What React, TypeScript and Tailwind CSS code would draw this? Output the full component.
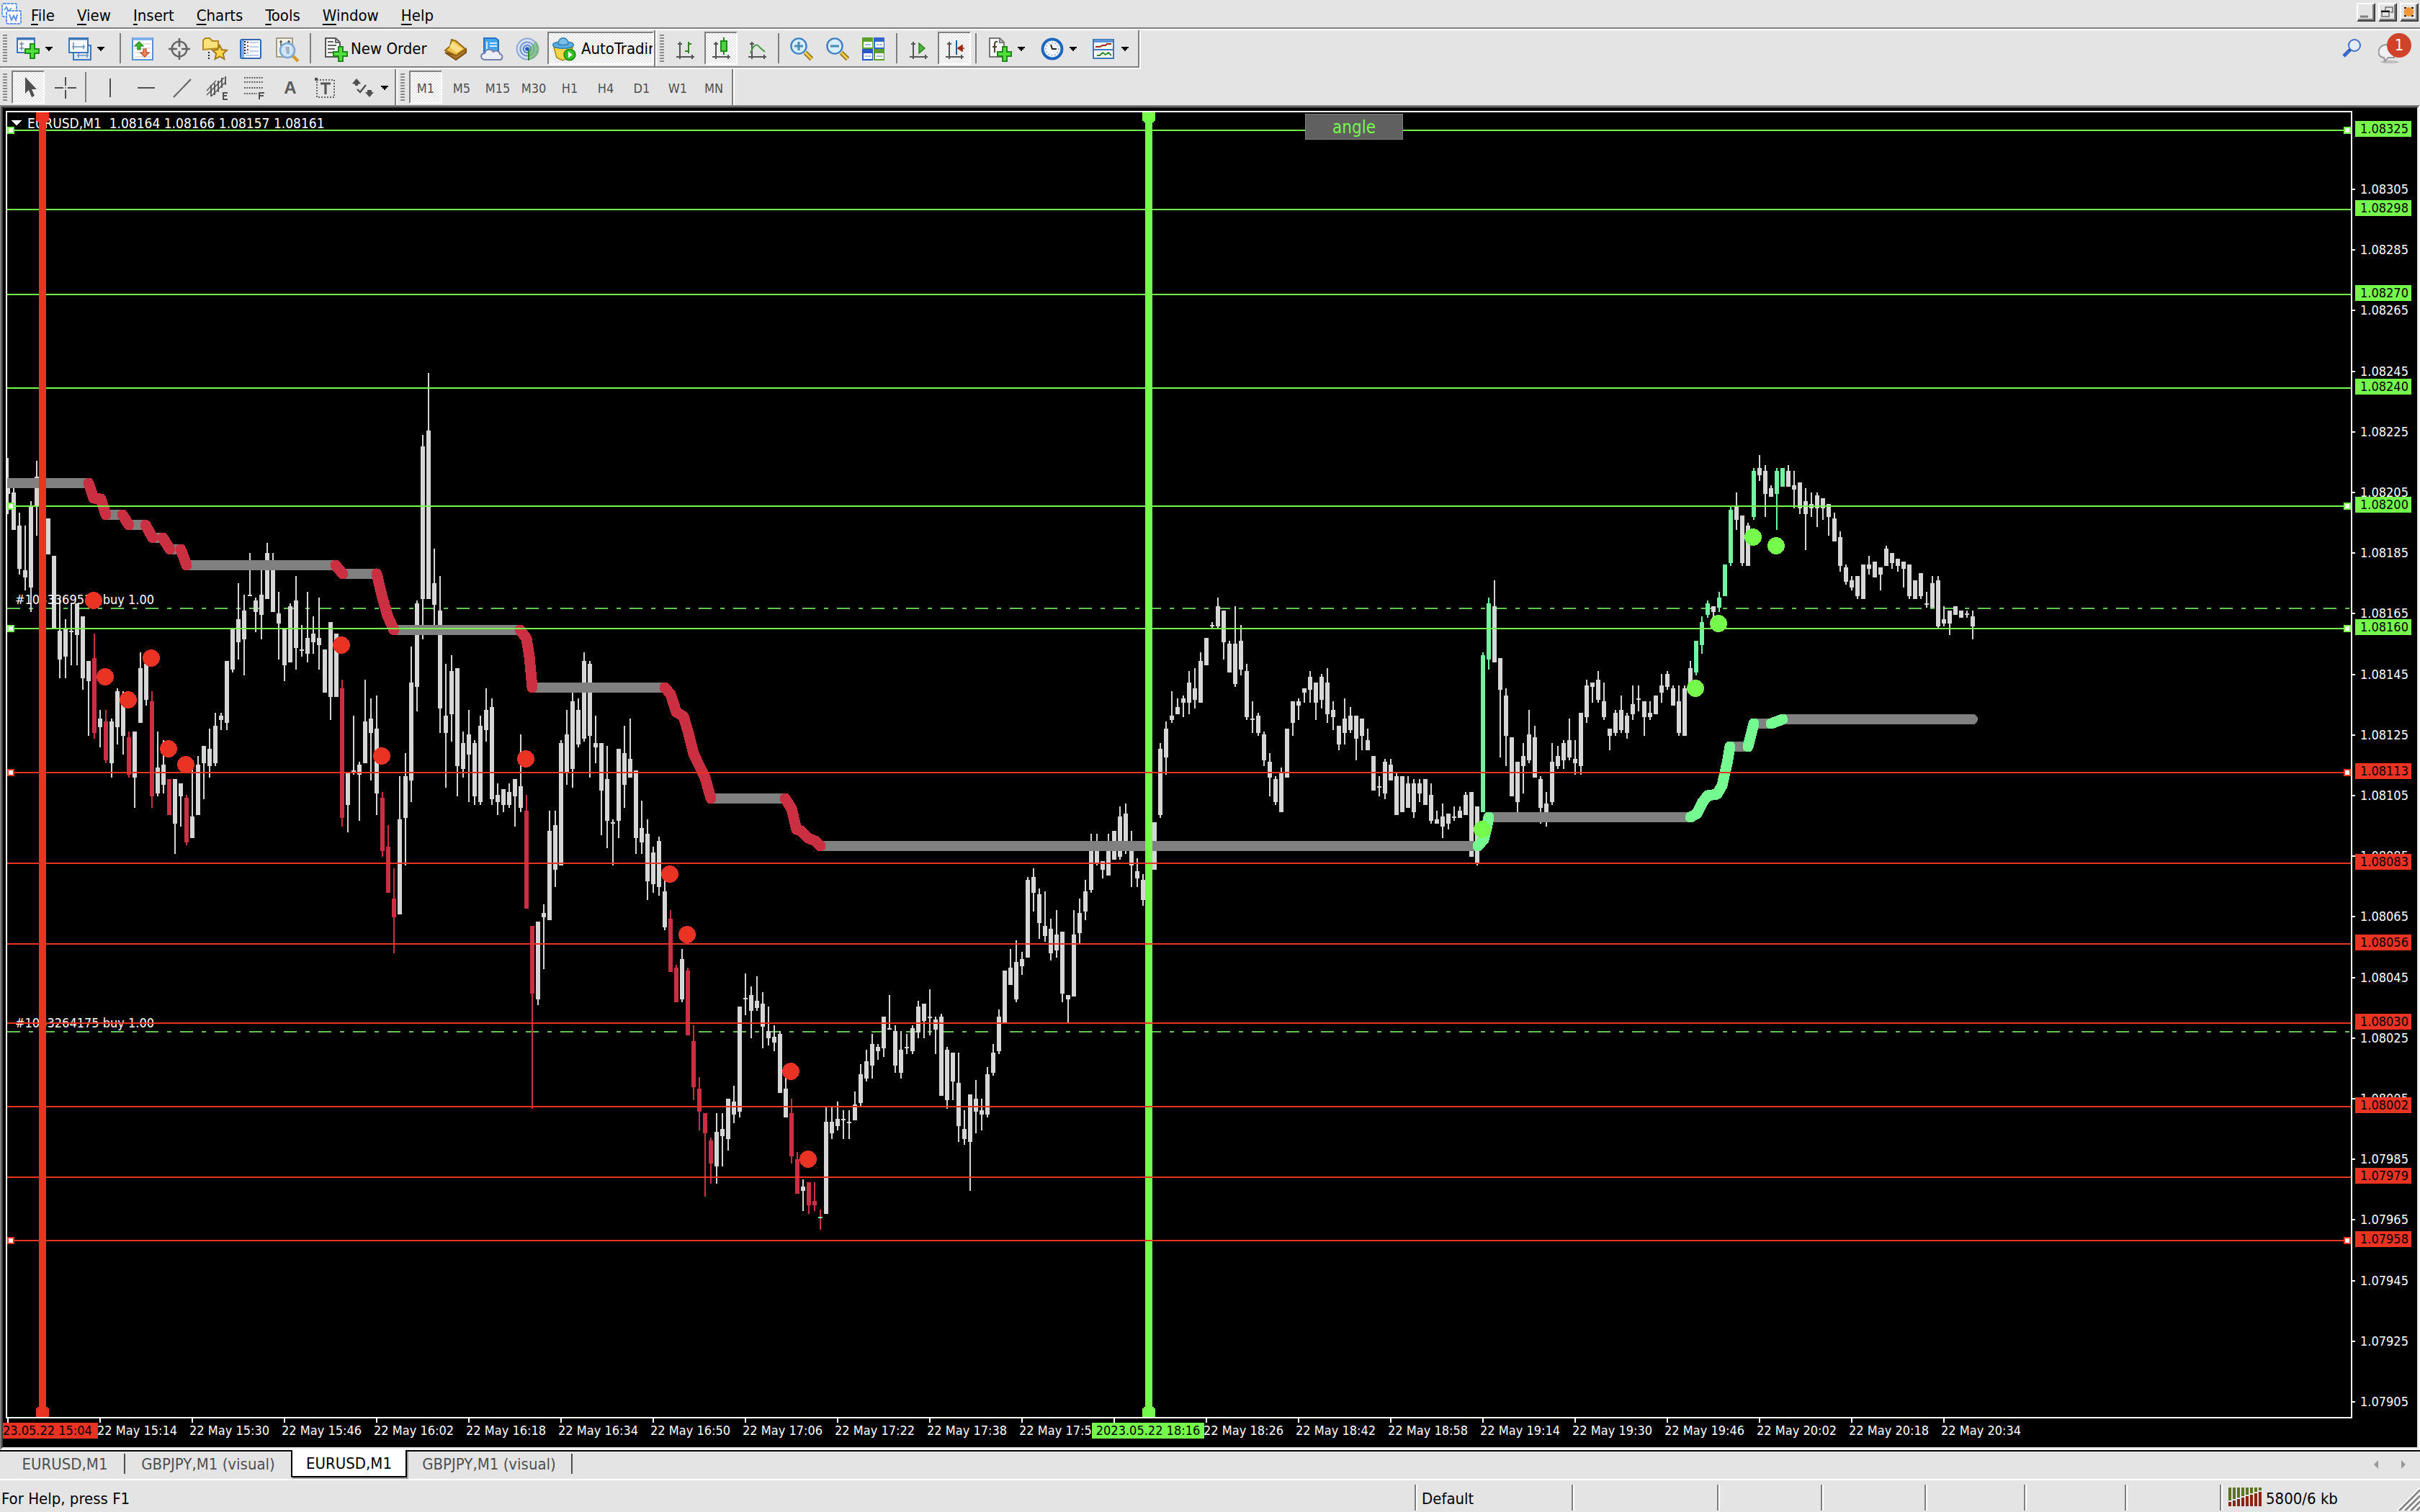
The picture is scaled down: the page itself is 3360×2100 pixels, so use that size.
import type { ReactNode } from 'react';
import clsx from 'clsx';

// One bar per minute: high/top/bottom/low in points above 1.08000.
// A leading r or g marks a trend bar, d a reversal bar.
const BAR_DATA = `
216/207/205/198 208/205/193/193 198/194/180/178 194/179/177/173 202/200/174/166 215/210/201/191 201/200/196/195 196/196/185/185
184/184/160/160 170/159/150/144 163/160/151/144 168/159/159/148 168/168/158/148 164/164/144/140 149/149/143/125 r158/150/126/124
133/130/128/121 r133/129/117/116 130/129/116/111 140/139/128/122 139/137/125/119 r126/124/112/111 126/126/111/101 152/147/129/129
149/148/137/135 r139/136/105/101 126/114/106/105 123/115/109/106 r110/110/99/99 110/110/96/86 109/109/105/95 r105/104/90/89
114/98/91/91 118/115/99/99 121/121/116/104 127/120/115/111 132/128/116/115 132/131/130/127 149/149/129/127 160/160/147/146
175/163/156/150 171/166/157/145 185/171/171/171 170/169/166/159 180/171/165/157 188/185/170/170 185/181/166/166 172/165/162/150
160/160/148/143 168/167/149/149 177/169/154/147 161/153/153/151 172/157/152/149 164/158/156/152 170/157/155/147 153/153/139/139
162/162/138/130 158/158/138/138 r143/140/98/95 112/112/102/93 131/113/113/112 116/115/112/97 143/129/116/116 137/130/126/110
138/127/106/99 r106/104/87/85 r95/88/73/73 r81/71/65/53 111/97/66/66 119/111/98/82 154/142/110/103 169/168/141/133
224/220/170/157 244/225/170/170 186/175/168/161 177/166/134/126 148/131/126/108 151/146/132/123 147/147/115/105 126/122/114/111
133/125/119/103 123/122/105/102 131/128/103/102 140/133/127/123 137/134/104/102 109/105/103/99 107/107/102/100 109/106/102/101
110/110/105/95 125/108/101/100 r105/100/68/68 r62/62/40/2 63/63/38/36 69/66/65/48 100/93/64/64 100/95/81/75
123/122/82/82 133/125/113/109 139/136/114/108 137/133/122/121 152/149/124/123 149/148/125/111 131/122/121/116 122/122/107/92
121/110/97/88 97/96/96/82 120/120/97/91 128/119/109/101 130/117/111/111 113/113/91/86 103/94/90/86 97/92/77/71
88/86/76/73 91/90/75/72 77/73/62/61 r67/64/47/47 r49/48/37/37 54/51/38/37 r48/47/26/26 r29/24/9/5
r12/8/1/-5 r0/0/-6/-27 r-8/-9/-16/-23 0/-6/-17/-23 0/-5/-7/-17 5/5/-8/-12 9/4/0/-3 35/35/1/-1
46/38/38/33 42/39/34/25 45/37/35/34 40/36/29/22 35/27/25/23 29/25/24/21 27/26/7/7 12/8/-1/-1
r5/0/-14/-16 r-13/-15/-26/-26 -22/-24/-25/-32 r-23/-23/-30/-33 r-23/-29/-30/-32 d-32/-34/-34/-38 2/-3/-33/-33 2/-3/-6/-8
4/-2/-4/-5 1/-2/-2/-8 1/-3/-3/-8 7/3/-2/-2 16/13/4/3 21/17/12/11 26/23/16/12 23/22/21/18
32/32/22/19 39/28/28/28 29/27/16/14 27/21/14/12 26/22/22/20 29/28/21/20 37/35/27/25 36/36/31/25
41/32/32/26 32/31/28/20 33/32/6/6 22/21/5/2 20/20/11/5 20/10/-4/-9 1/-5/-8/-10 6/6/-9/-25
11/5/1/-6 5/1/0/-5 15/13/0/-1 23/20/14/13 34/32/21/20 47/47/30/30 54/48/43/43 57/50/38/37
53/51/49/46 78/77/52/52 81/78/73/67 74/72/63/58 73/62/59/57 64/61/53/51 67/59/54/52 60/60/40/37
39/39/38/30 67/59/39/39 71/66/60/56 77/73/67/64 92/88/74/73 92/88/83/82 83/83/81/78 92/88/79/79
93/93/84/84 101/98/85/84 102/99/88/86 93/88/82/75 84/80/78/75 79/77/71/69 80/80/75/75 96/96/81/81
122/120/99/98 129/127/118/112 139/131/130/129 137/134/132/132 138/137/136/131 146/142/136/132 147/140/137/134 152/149/136/136
157/157/148/148 162/161/161/160 170/167/161/160 166/166/156/150 156/155/146/146 167/155/142/141 161/156/147/145 148/146/131/130
136/130/130/126 132/131/126/125 126/125/117/115 119/116/111/105 111/110/103/102 114/112/100/100 127/127/111/111 136/136/129/125
137/136/135/130 140/140/139/136 146/144/140/136 142/142/136/130 145/144/137/134 147/142/132/129 136/133/131/127 128/128/122/120
137/130/126/122 134/131/127/126 131/131/124/117 130/130/125/120 127/123/120/120 118/118/107/107 111/108/108/105 117/116/106/104
117/115/110/110 112/111/99/99 111/111/100/100 111/109/101/101 110/109/100/98 110/109/106/103 110/110/102/102 109/105/97/96
100/97/96/96 102/98/95/91 99/99/96/94 101/98/98/97 101/100/98/98 106/105/99/99 106/106/85/85 101/101/83/82
g152/151/100/100 g170/168/150/147 176/167/149/149 150/150/140/118 140/138/125/115 124/124/105/105 116/116/103/100 122/118/115/106
133/125/117/116 128/124/111/111 111/110/101/96 106/102/98/95 122/116/103/102 121/118/115/114 123/122/117/114 130/123/118/117
123/117/116/112 132/132/115/112 143/141/131/129 142/142/141/136 146/143/137/136 142/136/131/130 127/127/125/120 133/132/126/125
138/133/127/126 132/131/126/124 141/135/132/130 141/137/137/133 136/136/131/125 136/132/131/130 138/138/132/132 145/141/139/136
146/145/141/140 141/140/135/135 141/136/126/125 141/140/125/125 149/147/142/142 g156/156/146/145 g164/162/155/152 g169/168/165/164
167/167/166/163 g172/170/167/166 g181/181/171/171 g200/199/182/181 205/200/196/193 197/197/182/181 195/194/181/181 g213/212/197/196
217/213/211/209 214/212/205/197 207/206/204/204 g213/212/205/193 g213/213/207/207 214/212/207/207 212/207/206/200 208/208/200/198
206/202/198/186 205/201/200/197 205/204/200/194 203/203/200/196 201/201/197/191 198/196/189/189 192/190/181/179 181/180/176/175
177/176/174/173 177/177/171/170 181/181/170/170 184/181/180/178 182/182/177/177 180/180/178/173 187/186/181/181 185/185/182/180
183/183/181/179 182/182/180/174 181/181/171/170 176/176/170/170 178/178/171/170 172/168/168/167 177/175/167/167 177/176/161/160
167/163/162/161 166/166/162/158 167/167/165/165 166/166/164/164 166/165/165/164 166/164/161/157`;

const BAR_COLORS: Record<string, { wick: string; body: string }> = {
  r: { wick: '#cb3042', body: '#cb3042' },
  g: { wick: '#72f5a0', body: '#72f5a0' },
  d: { wick: '#cb3042', body: '#72f5a0' },
};

const bars = BAR_DATA.trim().split(/\s+/).map((item) => {
  const colors = BAR_COLORS[item[0]] ?? { wick: '#d6d6d6', body: '#d6d6d6' };
  const [high, top, bottom, low] = item.replace(/^[rgd]/, '').split('/').map(Number);
  return { ...colors, high, top, bottom, low };
});

const GREEN = '#75fb4c';
const RED = '#ea3323';

const priceY = (points: number) => 263 + (305 - points) * 4.21;
const snap = (y: number) => Math.round(y / 2) * 2;
const formatPrice = (points: number) => (1.08 + points / 100000).toFixed(5);

const levels = [
  { points: 325, y: 181, color: GREEN, handles: true },
  { points: 298, y: 291, color: GREEN },
  { points: 270, y: 409, color: GREEN },
  { points: 240, y: 539, color: GREEN },
  { points: 200, y: 703, color: GREEN, handles: true },
  { points: 160, y: 873, color: GREEN, handles: true },
  { points: 113, y: 1073, color: RED, handles: true },
  { points: 83, y: 1199, color: RED },
  { points: 56, y: 1311, color: RED },
  { points: 30, y: 1421, color: RED },
  { points: 2, y: 1537, color: RED },
  { points: -21, y: 1635, color: RED },
  { points: -42, y: 1723, color: RED, handles: true },
];

const orders = [
  { y: 845, label: '#1033369512 buy 1.00' },
  { y: 1433, label: '#1033264175 buy 1.00' },
];

const flatRibbon = [
  '0,671 123,671', '147,715 170,715', '179,729 202,729', '212,747 226,747', '236,763 251,763', '259,785 466,785',
  '476,797 523,797', '547,875 722,875', '739,955 923,955', '987,1109 1090,1109', '1139,1175 2052,1175',
  '2067,1135 2347,1135', '2402,1037 2427,1037', '2435,1005 2459,1005', '2475,999 2739,999',
];

const downRibbon = [
  '123,671 130,692 140,693 147,715', '170,715 179,729', '202,729 212,747', '226,747 236,763', '251,763 259,785',
  '466,785 476,797', '523,797 531,830 538,855 547,875', '722,875 731,887 735,912 739,955',
  '923,955 931,964 939,989 949,995 955,1015 963,1047 979,1080 987,1109',
  '1090,1109 1099,1123 1106,1152 1112,1154 1122,1164 1132,1168 1139,1175',
];

const upRibbon = [
  '2052,1175 2060,1166 2064,1150 2067,1135',
  '2347,1135 2356,1130 2364,1114 2371,1105 2384,1103 2391,1091 2398,1060 2402,1037',
  '2427,1037 2435,1005', '2459,1005 2475,999',
];

const sellDots = [
  [130, 834], [146, 940], [178, 972], [210, 914], [234, 1040], [258, 1062], [474, 896], [530, 1050],
  [730, 1054], [930, 1214], [954, 1298], [1098, 1488], [1122, 1610],
];
const buyDots = [[2058, 1152], [2434, 746], [2466, 758], [2386, 866], [2354, 956]];

// an empty entry keeps its tick but gives its room to a marker label
const times = [
  '', '15:14', '15:30', '15:46', '16:02', '16:18', '16:34', '16:50', '17:06', '17:22', '17:38',
  '17:54', '', '18:26', '18:42', '18:58', '19:14', '19:30', '19:46', '20:02', '20:18', '20:34',
];

const axisPoints = Array.from({ length: 21 }, (_, i) => 305 - i * 20);

function Icon({ children }: { children: ReactNode }) {
  return (
    <svg viewBox="0 0 16 16" className="h-8 w-8 shrink-0 overflow-visible" aria-hidden="true">
      {children}
    </svg>
  );
}

function Plus() {
  return <path d="M9.5 3.5h3v3.500h3v3h-3v3.500h-3v-3.500h-3.500v-3h3.500z" fill="#4fe03c" stroke="#1f8a17" />;
}

const NewChartIcon = () => (
  <Icon>
    <rect x="0.500" y="0.500" width="12" height="10" fill="#f4f8fe" stroke="#3f76b8" />
    <path d="M0.500 1h12" stroke="#3f76b8" strokeWidth="1.500" />
    <path d="M3.500 3v6M2 4.500h3M2 7.500h3" stroke="#6f93b8" strokeWidth="0.800" />
    <g transform="translate(0 1)"><Plus /></g>
  </Icon>
);

const ProfilesIcon = () => (
  <Icon>
    <rect x="3.500" y="5.500" width="12" height="10" fill="#dde9f8" stroke="#3f76b8" />
    <path d="M6 12.500h8M7 11v3M13 11v3" stroke="#6f93b8" strokeWidth="0.800" />
    <rect x="0.500" y="0.500" width="13" height="10" fill="#f4f8fe" stroke="#3f76b8" />
    <path d="M0.500 1h13" stroke="#3f76b8" strokeWidth="1.500" />
    <path d="M2.500 6.500h9M3.500 3.500v5M10.500 5v3" stroke="#6f93b8" strokeWidth="0.800" />
  </Icon>
);

const MarketWatchIcon = () => (
  <Icon>
    <rect x="0.500" y="0.500" width="14" height="15" fill="#fff" stroke="#5b8fd0" />
    <path d="M0.500 1h14" stroke="#7fb0ea" strokeWidth="2" />
    <path d="M2 4.500h11M2 7.500h11M2 10.500h11M2 13.500h11" stroke="#e2e2e2" />
    <path d="M5 3l3 3H6v2.500H4V6H2z" fill="#3fb833" stroke="#1f8a17" strokeWidth="0.600" />
    <path d="M9 13.500l-3-3h2V8h2v2.500h2z" fill="#ef8a60" stroke="#b8421c" strokeWidth="0.600" />
  </Icon>
);

const DataWindowIcon = () => (
  <Icon>
    <circle cx="8" cy="8" r="5.200" fill="none" stroke="#636363" strokeWidth="1.200" />
    <path d="M8 0.500v6M8 9.500v6M0.500 8h6M9.500 8h6" stroke="#636363" strokeWidth="1.300" />
  </Icon>
);

const NavigatorIcon = () => (
  <Icon>
    <path d="M-0.500 8.500V2L1 0.500h3L6 2.500h4v5z" fill="#fbe27a" stroke="#b28a1d" />
    <path d="M3.500 10v6" stroke="#222" strokeDasharray="1 1" />
    <path d="M11 5.500l1.500 3 3.500.4-2.600 2.400.8 3.700-3.200-1.800-3.200 1.800.8-3.700-2.600-2.400 3.500-.4z" fill="#fbd54a" stroke="#a8761a" />
  </Icon>
);

const TerminalIcon = () => (
  <Icon>
    <rect x="0.500" y="1.500" width="14" height="13" rx="1" fill="#fff" stroke="#2f66ad" />
    <path d="M2 2v12" stroke="#7fb0ea" strokeWidth="2" />
    <path d="M3.500 2.500v9" stroke="#222" strokeDasharray="1 1" />
    <path d="M5.500 3v8" stroke="#e52620" strokeDasharray="1 1.500" />
    <path d="M7 3.500h6M7 6.500h6M7 9.500h6M4 12.500h9" stroke="#b9cdec" />
  </Icon>
);

const TesterIcon = () => (
  <Icon>
    <rect x="0.500" y="0.500" width="11" height="13" fill="#f6f3ea" stroke="#a59c84" />
    <path d="M3.500 2v4M9 2v3M2.500 3h2M8 3h2" stroke="#555" strokeWidth="0.800" />
    <path d="M11.500 12.500l4 4" stroke="#d89a24" strokeWidth="2.200" />
    <circle cx="8" cy="9" r="5" fill="#cfe6fa" fillOpacity="0.900" stroke="#7ba7d2" strokeWidth="1.300" />
    <path d="M6.500 6.500h3v5h-2z" fill="#9fb4c6" />
  </Icon>
);

const NewOrderIcon = () => (
  <Icon>
    <path d="M0.500 0.500h7l3 3v10h-10z" fill="#fafafa" stroke="#555" />
    <path d="M7.500 0.500v3h3M2 3h4M2 5.500h6M2 8h5M2 10.500h4" fill="none" stroke="#666" />
    <g transform="translate(0 3)"><Plus /></g>
  </Icon>
);

const BookIcon = () => (
  <Icon>
    <path d="M0.500 10.500L8 15.500l7-5v-2.500L8 12.500z" fill="#b07a2c" stroke="#7a4d12" />
    <path d="M5 1.500l3 1 6.500 5.500L8 12.500 0.500 9 4 6z" fill="#f3c24a" stroke="#9a6a17" />
    <path d="M5.500 3l7 5-4 2.500-5-4z" fill="#fbe08a" />
  </Icon>
);

const CloudIcon = () => (
  <Icon>
    <path d="M2.500 0.500h8l2 1.500v8h-10z" fill="#43a5f2" stroke="#2672c4" />
    <path d="M4.500 3v5M6.500 4h5M6.500 6h5" stroke="#d5ecff" />
    <path d="M3 15.500c-3.500-.5-3-4.500 0-4.500C3.500 8 7.500 7.500 9 10c2-1.500 4.500-.3 4.500 1.500 2.500.5 2 4 0 4z" fill="#eceff8" stroke="#7480a8" />
  </Icon>
);

const SignalIcon = () => (
  <Icon>
    <circle cx="7.500" cy="8" r="7.200" fill="#d5e3ee" stroke="#8fa8d8" />
    <circle cx="7.500" cy="8" r="4.800" fill="none" stroke="#7a98d6" />
    <circle cx="7.500" cy="8" r="2.600" fill="none" stroke="#5c84d0" />
    <path d="M8.500 8l5-5.500a7.500 7.500 0 0 1-5 13z" fill="#62b35a" fillOpacity="0.600" />
    <path d="M8.500 8v8" stroke="#2f8f26" />
    <circle cx="7.500" cy="8" r="1.400" fill="#2258c8" />
  </Icon>
);

const AutoTradingIcon = () => (
  <Icon>
    <path d="M1 7h13l-3 7.500-4 1.500-4-2z" fill="#f5d548" stroke="#a98a1c" strokeWidth="0.800" />
    <ellipse cx="7.500" cy="5.200" rx="7.200" ry="2.500" fill="#5aaede" stroke="#2f7cb0" strokeWidth="0.700" />
    <path d="M4 4.500C4 -1 11 -1 11 4.500c-2 1-5 1-7 0z" fill="#78c0ea" stroke="#2f7cb0" strokeWidth="0.700" />
    <circle cx="12" cy="12" r="3.900" fill="#2fc321" stroke="#14860c" strokeWidth="0.800" />
    <path d="M11 9.800v4.400l3-2.200z" fill="#fff" />
  </Icon>
);

function Axes() {
  return (
    <>
      <path d="M3.500 3v12M1 13.500h12.500" stroke="#555" />
      <path d="M2 4.500h3M12 12v3" stroke="#555" />
    </>
  );
}

const BarChartIcon = () => (
  <Icon>
    <Axes />
    <path d="M9.500 3v8M9.500 4.500h2M7 9.500h2.500" stroke="#2f8020" />
  </Icon>
);

const CandlesIcon = () => (
  <Icon>
    <Axes />
    <path d="M9 0v12" stroke="#1f8a17" />
    <rect x="7" y="2.500" width="4" height="7" fill="#4fd047" stroke="#1f8a17" />
  </Icon>
);

const LineChartIcon = () => (
  <Icon>
    <Axes />
    <path d="M2.500 11c2-6 4.500-7 6-4.500l4 3.500" fill="none" stroke="#4a9a42" />
  </Icon>
);

function Magnifier({ children }: { children?: ReactNode }) {
  return (
    <Icon>
      <path d="M10.500 10.500l4.500 4.500" stroke="#8a6a10" strokeWidth="3.200" />
      <path d="M10.500 10.500l4.500 4.500" stroke="#eccb45" strokeWidth="1.600" />
      <circle cx="6" cy="6" r="5.300" fill="#d7eefc" stroke="#3f7fc4" strokeWidth="1.200" />
      {children}
    </Icon>
  );
}

const TileIcon = () => (
  <Icon>
    <rect width="7.500" height="8" fill="#5aa02c" />
    <rect x="8" width="7.500" height="8" fill="#3465cc" />
    <rect y="8" width="7.500" height="8" fill="#2858c8" />
    <rect x="8" y="8" width="7.500" height="8" fill="#5aa02c" />
    <path d="M1 3h6v4H1zM9 3h6v4H9zM1 11h6v4H1zM9 11h6v4H9z" fill="#fff" />
    <path d="M2 5h4M10 5h1.500M12 5h2M2 13h1.500M4 13h2M10 13h4" stroke="#9ab8dc" />
  </Icon>
);

const ScrollIcon = () => (
  <Icon>
    <Axes />
    <path d="M7.500 4l4 3.500-4 3.500z" fill="#4fb047" stroke="#1f8a17" strokeWidth="0.700" />
  </Icon>
);

const ShiftIcon = () => (
  <Icon>
    <Axes />
    <path d="M8.500 2v10" stroke="#1d5f9a" />
    <path d="M9.500 7.500l3-2v4z M12 7.500h2" fill="#9c2a10" stroke="#9c2a10" strokeWidth="0.800" />
  </Icon>
);

const IndicatorIcon = () => (
  <Icon>
    <path d="M0.500 0.500h7l3 3v10h-10z" fill="#fafafa" stroke="#777" />
    <path d="M7.500 0.500v3h3" fill="none" stroke="#777" />
    <path d="M6 3c-2-.5-2 1-2 2.500v5M2.500 6.500h3" fill="none" stroke="#4a4030" />
    <g transform="translate(0 3)"><Plus /></g>
  </Icon>
);

const ClockIcon = () => (
  <Icon>
    <circle cx="8" cy="8" r="6.700" fill="#f1f6fc" stroke="#1c66c0" strokeWidth="2" />
    <circle cx="8" cy="8" r="4.500" fill="none" stroke="#9aa7b5" strokeWidth="0.800" strokeDasharray="0.800 1.500" />
    <path d="M7 5l1 3h3" fill="none" stroke="#222" />
  </Icon>
);

const TemplateIcon = () => (
  <Icon>
    <rect x="0.500" y="1.500" width="14" height="13" fill="#fff" stroke="#3f76b8" />
    <path d="M1 2.500h13" stroke="#5b93d8" strokeWidth="2" />
    <path d="M1 8.500h13" stroke="#3f76b8" />
    <path d="M2 6.500h3l2-1h2l1-1h3" fill="none" stroke="#9c2a10" />
    <path d="M3 12.500h2l2-2 2 1.500 2-1.500 2 2" fill="none" stroke="#2f8f26" />
  </Icon>
);

const CursorIcon = () => (
  <Icon>
    <path d="M5 0.500v11.500l2.500-2.500 2 5 2-1-2-4.500H13z" fill="#505050" />
  </Icon>
);

const CrosshairIcon = () => (
  <Icon>
    <path d="M8 0.500v6M8 9.500v6M0.500 8h6M9.500 8h6M7.700 8h0.600" stroke="#505050" />
  </Icon>
);

const VerticalIcon = () => <Icon><path d="M8 1.500v13" stroke="#505050" /></Icon>;
const HorizontalIcon = () => <Icon><path d="M2 8h12" stroke="#505050" /></Icon>;
const TrendIcon = () => <Icon><path d="M2 14.500L14 2" stroke="#606060" /></Icon>;

const ChannelIcon = () => (
  <Icon>
    <path d="M0 10l6.500-7M0 13L12 1M3 14l10-10" stroke="#606060" strokeWidth="0.800" />
    <path d="M3 6v8M5.500 5v8M8 3v8M10.500 1v7M13 0v6" stroke="#505050" strokeWidth="0.900" />
    <path d="M14.500 11.500h-3v4.500h3M11.500 13.500h2.500" fill="none" stroke="#505050" />
  </Icon>
);

const FiboIcon = () => (
  <Icon>
    <path d="M1 1h13M1 4h13M1 8h13M1 12h9" stroke="#606060" strokeDasharray="1 0.700" />
    <path d="M11.500 16v-4.500h3.500M11.500 13.500h3" fill="none" stroke="#505050" />
  </Icon>
);

const LabelIcon = () => (
  <Icon>
    <rect x="1.500" y="2.500" width="12" height="12" fill="none" stroke="#606060" strokeDasharray="1 1" />
    <rect x="0" y="1" width="2" height="2" fill="#505050" />
    <path d="M4 5h7M7.500 5v7.500" stroke="#555" strokeWidth="1.600" />
  </Icon>
);

const ShapesIcon = () => (
  <Icon>
    <path d="M3 1.500l3 3.500-2 0.500v1h-2v-1L0 5zM9 11h1.500v-1.500h3V11h1.500l-3 3.500z" fill="#505050" />
    <path d="M3.500 9l2 2 4-5" fill="none" stroke="#505050" strokeWidth="1.200" />
  </Icon>
);

function Grip({ className }: { className?: string }) {
  return (
    <div
      className={clsx(
        'ml-1 h-[38px] w-1.5 shrink-0 bg-[repeating-linear-gradient(to_bottom,#8a8a8a_0_2px,transparent_2px_4px)]',
        className
      )}
    />
  );
}

function Divider() {
  return <div className="mx-1 h-[42px] w-0.5 shrink-0 bg-[#808080]" />;
}

const PRESSED =
  'border-2 border-[#808080] border-r-white border-b-white bg-[repeating-conic-gradient(#fff_0_25%,#e4e4e4_0_50%)] bg-[length:4px_4px]';

interface ToolProps {
  label: string;
  pressed?: boolean;
  children: ReactNode;
}

function Tool({ label, pressed, children }: ToolProps) {
  return (
    <button
      type="button"
      aria-label={label}
      aria-pressed={pressed}
      className={clsx(
        'mx-0.5 flex h-[46px] w-[46px] shrink-0 items-center justify-center pt-0.5 pl-1',
        pressed ? PRESSED : 'border-2 border-transparent'
      )}
    >
      {children}
    </button>
  );
}

function DropTool({ label, children }: ToolProps) {
  return (
    <button type="button" aria-label={label} className="flex h-[46px] w-[72px] shrink-0 items-center gap-2 pt-0.5 pl-[13px]">
      {children}
      <svg viewBox="0 0 10 6" className="h-1.5 w-2.5" aria-hidden="true">
        <path d="M0 0h10v2H8v2H6v2H4V4H2V2H0z" fill="#000" />
      </svg>
    </button>
  );
}

const menus = ['File', 'View', 'Insert', 'Charts', 'Tools', 'Window', 'Help'];
const periods = ['M1', 'M5', 'M15', 'M30', 'H1', 'H4', 'D1', 'W1', 'MN'];

function MenuBar() {
  return (
    <header className="flex h-10 shrink-0 items-start justify-between border-b-2 border-[#808080]">
      <div className="flex items-start">
        <svg viewBox="0 0 14 15" className="mt-1 ml-0.5 h-[30px] w-7" aria-hidden="true">
          <rect x="0.500" y="0.500" width="10" height="9" rx="1" fill="#fff" stroke="#5f9ae8" strokeDasharray="2 0.500" />
          <path d="M2 5l1.500-2L5 6l2-2.500" fill="none" stroke="#5f9ae8" />
          <rect x="3.500" y="5.500" width="10" height="9" rx="1" fill="#fff" stroke="#5b8ff0" strokeDasharray="2 0.500" />
          <path d="M5.500 8l1.500 4 1.500-3 1.500 3 1-4" fill="none" stroke="#5b8ff0" />
        </svg>
        <nav className="ml-[13px] flex gap-[31px] pt-1.5 text-[22px] leading-8 text-black">
          {menus.map((menu) => (
            <button key={menu} type="button">
              <span className="underline decoration-2 underline-offset-4">{menu[0]}</span>
              {menu.slice(1)}
            </button>
          ))}
        </nav>
      </div>
      <div className="flex gap-1 pt-1 pr-0.5">
        {['Minimize', 'Restore', 'Close'].map((label) => (
          <button
            key={label}
            type="button"
            aria-label={label}
            className="flex h-[26px] w-[26px] items-center justify-center border-2 border-[#404040] border-t-white border-l-white shadow-[inset_-2px_-2px_0_#808080]"
          >
            <svg viewBox="0 0 20 20" className="h-5 w-5" aria-hidden="true">
              {label === 'Minimize' && <path d="M2 16h11" stroke="#808080" strokeWidth="3" />}
              {label === 'Restore' && (
                <>
                  <path d="M7 8V3h10v7h-3M2 8h10v8H2z" fill="none" stroke="#888" strokeWidth="2" />
                  <path d="M1 9h12" stroke="#000" strokeWidth="2" />
                </>
              )}
              {label === 'Close' && (
                <>
                  <path d="M3 3h3v2H3zM13 3h3v2h-3zM3 14h3v2H3zM13 14h3v2h-3z" fill="#111" />
                  <ellipse cx="9.500" cy="9.500" rx="7" ry="6.500" fill="#f0983a" />
                </>
              )}
            </svg>
          </button>
        ))}
      </div>
    </header>
  );
}

function Toolbars() {
  return (
    <div className="flex shrink-0 justify-between border-t-2 border-white">
      <div className="flex flex-col items-start">
        <div className="mb-0.5 flex h-[52px] items-center border-r-2 border-b-2 border-[#808080] shadow-[2px_2px_0_#fff]">
          <div className="flex h-full items-center border-r-2 border-[#808080] shadow-[2px_0_0_#fff]">
            <Grip />
            <div className="flex pr-2">
              <DropTool label="New chart"><NewChartIcon /></DropTool>
              <DropTool label="Profiles"><ProfilesIcon /></DropTool>
            </div>
            <Divider />
            <div className="flex pr-1">
              <Tool label="Market Watch"><MarketWatchIcon /></Tool>
              <Tool label="Data Window"><DataWindowIcon /></Tool>
              <Tool label="Navigator"><NavigatorIcon /></Tool>
              <Tool label="Terminal"><TerminalIcon /></Tool>
              <Tool label="Strategy Tester"><TesterIcon /></Tool>
            </div>
            <Divider />
            <button type="button" className="flex h-[46px] w-[170px] items-center gap-1 pt-0.5 pl-[15px] text-[22px] leading-8 whitespace-nowrap text-black">
              <NewOrderIcon />
              New Order
            </button>
            <Tool label="MetaEditor"><BookIcon /></Tool>
            <Tool label="Virtual hosting"><CloudIcon /></Tool>
            <Tool label="Signals"><SignalIcon /></Tool>
            <button
              type="button"
              aria-pressed="true"
              className={clsx('ml-1 flex h-[46px] w-[148px] items-center gap-2 overflow-hidden pt-0.5 pl-[5px] text-[22px] leading-8 whitespace-nowrap text-black', PRESSED)}
            >
              <AutoTradingIcon />
              AutoTrading
            </button>
          </div>
          <div className="flex h-full items-center pr-1 pl-0.5">
            <Grip className="mr-1" />
            <Tool label="Bar chart"><BarChartIcon /></Tool>
            <Tool label="Candlesticks" pressed><CandlesIcon /></Tool>
            <Tool label="Line chart"><LineChartIcon /></Tool>
            <Divider />
            <Tool label="Zoom in"><Magnifier><path d="M6 3v6M3 6h6" stroke="#4a8fb5" strokeWidth="1.600" /></Magnifier></Tool>
            <Tool label="Zoom out"><Magnifier><path d="M3 6h6" stroke="#4a8fb5" strokeWidth="1.600" /></Magnifier></Tool>
            <Tool label="Tile windows"><TileIcon /></Tool>
            <div className="w-1" />
            <Divider />
            <Tool label="Auto scroll"><ScrollIcon /></Tool>
            <Tool label="Chart shift" pressed><ShiftIcon /></Tool>
            <Divider />
            <DropTool label="Indicators"><IndicatorIcon /></DropTool>
            <DropTool label="Periods"><ClockIcon /></DropTool>
            <DropTool label="Templates"><TemplateIcon /></DropTool>
          </div>
        </div>
        <div className="flex h-[50px] items-center">
          <div className="flex h-full items-center border-r-2 border-[#808080] shadow-[2px_0_0_#fff]">
            <Grip className="mr-1" />
            <div className="flex">
              <Tool label="Cursor" pressed><CursorIcon /></Tool>
              <Tool label="Crosshair"><CrosshairIcon /></Tool>
            </div>
            <Divider />
            <div className="flex pl-0.5">
              <Tool label="Vertical line"><VerticalIcon /></Tool>
              <Tool label="Horizontal line"><HorizontalIcon /></Tool>
              <Tool label="Trendline"><TrendIcon /></Tool>
              <Tool label="Equidistant channel"><ChannelIcon /></Tool>
              <Tool label="Fibonacci retracement"><FiboIcon /></Tool>
              <Tool label="Text"><span className="font-[Liberation_Sans] text-2xl font-bold text-[#5c5c5c]">A</span></Tool>
              <Tool label="Text label"><LabelIcon /></Tool>
              <DropTool label="Arrows"><ShapesIcon /></DropTool>
            </div>
          </div>
          <div className="flex h-full items-center border-r-2 border-[#808080] pl-0.5 shadow-[2px_0_0_#fff]">
            <Grip className="mr-1" />
            {periods.map((period) => (
              <button
                key={period}
                type="button"
                aria-pressed={period === 'M1'}
                className={clsx(
                  'mx-0.5 h-[46px] w-[46px] pt-1 text-center text-lg text-[#505050]',
                  period === 'M1' ? PRESSED : 'border-2 border-transparent'
                )}
              >
                {period}
              </button>
            ))}
          </div>
        </div>
      </div>
      <div className="flex items-start gap-6 pt-1 pr-3">
        <button type="button" aria-label="Search" className="pt-2">
          <svg viewBox="0 0 26 26" className="h-[26px] w-[26px]" aria-hidden="true">
            <path d="M2 24l9-9" stroke="#3a6ac8" strokeWidth="5" />
            <path d="M10 16l3-3" stroke="#1530a0" strokeWidth="3" />
            <ellipse cx="17" cy="9" rx="8" ry="8" fill="#e6ecf8" stroke="#3f6fd0" strokeWidth="2" />
          </svg>
        </button>
        <button type="button" aria-label="Notifications" className="relative h-[42px] w-[46px]">
          <svg viewBox="0 0 46 42" className="h-full w-full" aria-hidden="true">
            <ellipse cx="16" cy="40" rx="13" ry="2" fill="#bdbdbd" />
            <path d="M12 16c-14 0-15 18-4 18l1 5 5-5h8V16z" fill="#f0f0f4" stroke="#999" strokeWidth="2" />
            <circle cx="29" cy="17" r="17" fill="#cf432b" />
          </svg>
          <span className="absolute top-0 left-3 w-[34px] text-center text-[22px] leading-[34px] text-white">1</span>
        </button>
      </div>
    </div>
  );
}

function Handle({ x, y, color }: { x: number; y: number; color: string }) {
  return <rect x={x + 1} y={y - 4} width="8" height="8" fill="#fff" stroke={color} strokeWidth="2" />;
}

function VerticalMarker({ x, color }: { x: number; color: string }) {
  return (
    <svg x={x} className="overflow-visible" fill={color}>
      <rect x="-5" width="10" height="100%" />
      <path d="M-9 0h18v12h-2v2h-14v-2h-2z" />
      <svg y="100%" className="overflow-visible">
        <path d="M-9 0h18v-12h-2v-2h-14v2h-2z" />
      </svg>
    </svg>
  );
}

function Plot() {
  return (
    <div className="relative min-w-0 flex-1 overflow-hidden border-2 border-white">
      <svg className="absolute inset-0 h-full w-full" shapeRendering="crispEdges" role="img" aria-label="EURUSD M1 chart">
        {/* the price scale counts pixels from the window corner, the plot starts at 10,156 */}
        <g transform="translate(-10 -156)">
          {orders.map((order) => (
            <line key={order.y} x1="10" x2="3264" y1={order.y} y2={order.y} stroke="#63c451" strokeWidth="2" strokeDasharray="18 12 6 12" />
          ))}
          {bars.map((bar, i) => {
            const x = 11 + i * 8;
            const wickTop = snap(priceY(bar.high) - 1);
            const bodyTop = snap(priceY(bar.top) - 1);
            return (
              <g key={i}>
                <rect x={x - 1} y={wickTop} width="2" height={snap(priceY(bar.low) + 1) - wickTop} fill={bar.wick} />
                <rect x={x - 3} y={bodyTop} width="6" height={snap(priceY(bar.bottom) + 1) - bodyTop} fill={bar.body} />
              </g>
            );
          })}
          <g fill="none" strokeWidth="14" strokeLinecap="round" strokeLinejoin="round">
            {flatRibbon.map((points) => <polyline key={points} points={points} stroke="#808080" />)}
            {downRibbon.map((points) => <polyline key={points} points={points} stroke="#cb3042" strokeWidth="15" />)}
            {upRibbon.map((points) => <polyline key={points} points={points} stroke="#75fb90" strokeWidth="15" />)}
          </g>
          <g fill="#fff" className="text-lg">
            <path d="M16 167h14l-7 8z" />
            <text x="38" y="178" className="text-[19px]">EURUSD,M1{'\u00a0 '}1.08164 1.08166 1.08157 1.08161</text>
            {orders.map((order) => <text key={order.y} x="21" y={order.y - 6}>{order.label}</text>)}
          </g>
          {sellDots.map(([x, y]) => <circle key={x} cx={x} cy={y} r="12" fill={RED} />)}
          {buyDots.map(([x, y]) => <circle key={x} cx={x} cy={y} r="12" fill={GREEN} />)}
        </g>
        <VerticalMarker x={1585} color={GREEN} />
        {levels.map((level) => (
          <rect key={level.points} width="100%" height="2" y={level.y - 157} fill={level.color} />
        ))}
        <VerticalMarker x={49} color={RED} />
        {levels.filter((level) => level.handles).map((level) => (
          <g key={level.points}>
            <Handle x={0} y={level.y - 156} color={level.color} />
            <svg x="100%" className="overflow-visible">
              <Handle x={-10} y={level.y - 156} color={level.color} />
            </svg>
          </g>
        ))}
      </svg>
      <button type="button" className="absolute top-0.5 left-[1802px] h-9 w-[136px] border border-[#808080] bg-[#606060] text-2xl leading-9 text-[#75fb4c]">
        angle
      </button>
    </div>
  );
}

function PriceAxis() {
  return (
    <div className="relative w-[90px] shrink-0 text-lg text-white">
      {axisPoints.map((points) => (
        <div key={points} className="absolute left-0 flex h-[22px] items-center gap-[7px]" style={{ top: Math.round(priceY(points)) - 165 }}>
          <span className="h-0.5 w-1 bg-white" />
          {formatPrice(points)}
        </div>
      ))}
      {levels.map((level) => (
        <div
          key={level.points}
          className="absolute left-1 h-[22px] w-[78px] pl-[7px] leading-[22px] text-black"
          style={{ top: level.y - 167, backgroundColor: level.color }}
        >
          {formatPrice(level.points)}
        </div>
      ))}
    </div>
  );
}

function TimeAxis() {
  return (
    <div className="relative flex h-10 shrink-0 overflow-hidden pl-[3px] text-lg text-white">
      {times.map((time, i) => (
        <div key={i} className="w-32 shrink-0">
          <div className="ml-[3px] h-1.5 w-0.5 bg-white" />
          {time && <div className="leading-[22px] whitespace-nowrap">22 May {time}</div>}
        </div>
      ))}
      <div className="absolute top-1.5 left-0 h-[22px] w-[132px] bg-[#ea3323] leading-[22px] whitespace-nowrap text-black">23.05.22 15:04</div>
      <div className="absolute top-1.5 left-[1512px] h-[22px] w-[156px] bg-[#75fb4c] text-center leading-[22px] whitespace-nowrap text-black">
        2023.05.22 18:16
      </div>
    </div>
  );
}

const tabs = ['EURUSD,M1', 'GBPJPY,M1 (visual)', 'EURUSD,M1', 'GBPJPY,M1 (visual)'];

function TabBar() {
  return (
    <div className="flex h-[42px] shrink-0 items-start justify-between border-b-2 border-white pl-2 text-[22px] text-[#505050] shadow-[inset_0_2px_0_#000]">
      <div className="flex">
        {tabs.map((tab, i) =>
          i === 2 ? (
            <button key={i} type="button" className="h-[38px] w-[161px] border-2 border-t-0 border-black bg-white text-black shadow-[2px_2px_0_#a0a0a0]">
              {tab}
            </button>
          ) : (
            <div key={i} className={clsx('flex h-[38px] items-center justify-between', i === 0 ? 'w-[166px]' : 'w-[230px]')}>
              <button type="button" className="flex-1 whitespace-nowrap">{tab}</button>
              {i !== 1 && <div className="h-7 w-0.5 bg-[#505050]" />}
            </div>
          )
        )}
      </div>
      <div className="flex h-10 items-center gap-8 pr-5">
        <button type="button" aria-label="Scroll tabs left">
          <svg viewBox="0 0 6 12" className="h-3 w-1.5"><path d="M6 0v12L0 6z" fill="#999" /></svg>
        </button>
        <button type="button" aria-label="Scroll tabs right">
          <svg viewBox="0 0 6 12" className="h-3 w-1.5"><path d="M0 0v12l6-6z" fill="#999" /></svg>
        </button>
      </div>
    </div>
  );
}

function StatusBar() {
  const cell = 'h-9 shrink-0 border-l-2 border-[#808080] shadow-[inset_2px_0_0_#fff]';

  return (
    <footer className="flex h-11 shrink-0 items-center pt-1 text-[22px] leading-10 text-black">
      <div className="h-9 flex-1 pl-0.5">For Help, press F1</div>
      <div className={clsx(cell, 'w-[218px] pl-2')}>Default</div>
      <div className={clsx(cell, 'w-[202px]')} />
      <div className={clsx(cell, 'w-36')} />
      <div className={clsx(cell, 'w-36')} />
      <div className={clsx(cell, 'w-[138px]')} />
      <div className={clsx(cell, 'w-[140px]')} />
      <div className={clsx(cell, 'w-[132px]')} />
      <div className={clsx(cell, 'flex w-[278px] justify-between pl-2.5')}>
        <div className="flex items-start gap-1.5">
          <svg viewBox="0 0 23 13" className="mt-1 h-[26px] w-[46px]" aria-hidden="true">
            {[9, 8, 7, 6, 5, 4, 3, 2].map((height, i) => (
              <g key={height}>
                <rect x={i * 3} y="0" width="2" height={height} fill="#5c7420" />
                <rect x={i * 3} y={height + 1} width="2" height={12 - height} fill="#8c2412" />
              </g>
            ))}
          </svg>
          5800/6 kb
        </div>
        <svg viewBox="0 0 32 32" className="h-8 w-8 self-end" aria-hidden="true">
          <path d="M3 32L32 3M11 32L32 11M19 32L32 19M27 32L32 27" stroke="#808080" strokeWidth="3" />
          <path d="M0 32L32 0M8 32L32 8M16 32L32 16M24 32L32 24" stroke="#fff" strokeWidth="2" />
        </svg>
      </div>
    </footer>
  );
}

export default function App() {
  return (
    <div className="flex min-h-screen flex-col overflow-hidden bg-[#e4e4e4] font-['DejaVu_Sans_Condensed','Noto_Sans',sans-serif]">
      <MenuBar />
      <Toolbars />
      <main className="flex flex-1 border-2 border-[#808080] border-r-white border-b-white">
        <div className="flex min-w-0 flex-1 flex-col border-2 border-[#404040] border-r-[#e4e4e4] border-b-[#e4e4e4] bg-black">
          <div className="flex flex-1 pt-1 pl-1">
            <Plot />
            <PriceAxis />
          </div>
          <TimeAxis />
        </div>
      </main>
      <TabBar />
      <StatusBar />
    </div>
  );
}
